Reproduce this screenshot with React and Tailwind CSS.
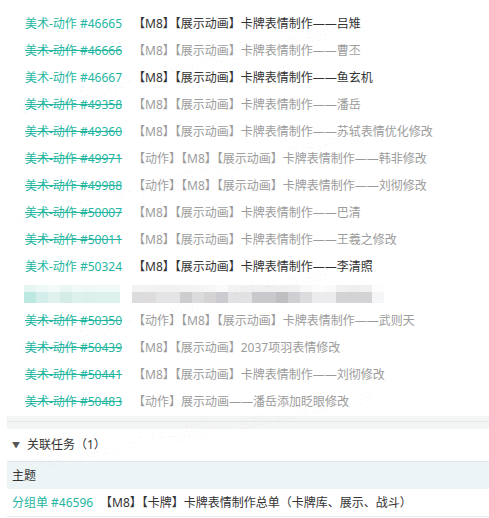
import React from "react";

const rows = [
  { id: "46665", t: "【M8】【展示动画】卡牌表情制作——吕雉", done: false },
  { id: "46666", t: "【M8】【展示动画】卡牌表情制作——曹丕", done: true },
  { id: "46667", t: "【M8】【展示动画】卡牌表情制作——鱼玄机", done: false },
  { id: "49358", t: "【M8】【展示动画】卡牌表情制作——潘岳", done: true },
  { id: "49360", t: "【M8】【展示动画】卡牌表情制作——苏轼表情优化修改", done: true },
  { id: "49971", t: "【动作】【M8】【展示动画】卡牌表情制作——韩非修改", done: true },
  { id: "49988", t: "【动作】【M8】【展示动画】卡牌表情制作——刘彻修改", done: true },
  { id: "50007", t: "【M8】【展示动画】卡牌表情制作——巴清", done: true },
  { id: "50011", t: "【M8】【展示动画】卡牌表情制作——王羲之修改", done: true },
  { id: "50324", t: "【M8】【展示动画】卡牌表情制作——李清照", done: false },
  { blur: true },
  { id: "50350", t: "【动作】【M8】【展示动画】卡牌表情制作——武则天", done: true },
  { id: "50439", t: "【M8】【展示动画】2037项羽表情修改", done: true },
  { id: "50441", t: "【M8】【展示动画】卡牌表情制作——刘彻修改", done: true },
  { id: "50483", t: "【动作】展示动画——潘岳添加眨眼修改", done: true },
];

const tealBottom = ["#bde8e2", "#d4efeb", "#dff2ef", "#d5ebe8", "#dcf0ed", "#dbf0ec", "#dcf0ed", "#dcf0ed"];
const tealTop = ["#e4f5f2", "#eef8f6", "#f3faf9", "#eaf6f4", "#f0f9f7", "#eff8f7", "#f0f9f7", "#f0f9f7"];
const grayBottom = ["#dcdbdd", "#dedcdd", "#e4e3e5", "#e4e3e5", "#cdcdd0", "#dcdbde", "#d6d3d4", "#cccbd0", "#e2e1e3", "#e2e1e3", "#c9c8cc", "#c9c8cc", "#bfbfc2", "#cfced2", "#dcdcdf", "#ececee", "#ececee", "#d3d2d5", "#d3d2d5", "#d3d2d5", "#f5f6f7"];
const grayTop = ["#f3f3f4", "#f2f2f3", "#f1f1f2", "#f1f1f2", "#f3f3f4", "#f4f4f5", "#f6f6f7", "#fafafa", "#f3f3f4", "#f1f1f2", "#f0f0f1", "#f0f0f1", "#f0f0f1", "#f1f1f2", "#f8f8f9", "#fcfcfc", "#fafafa", "#f0f0f1", "#eeeeef", "#f0f0f1", "#fdfdfd"];

function Strip({ colors, h }) {
  return (
    <div className={`flex ${h}`}>
      {colors.map((c, i) => (
        <div key={i} className="w-[12px] h-full" style={{ background: c }} />
      ))}
    </div>
  );
}

function BlurRow() {
  return (
    <div className="flex items-center h-[27px] pl-[24px]">
      <div className="flex flex-col">
        <Strip colors={tealTop} h="h-[7px]" />
        <Strip colors={tealBottom} h="h-[11px]" />
      </div>
      <div className="flex flex-col ml-[12px]">
        <Strip colors={grayTop} h="h-[7px]" />
        <Strip colors={grayBottom} h="h-[11px]" />
      </div>
    </div>
  );
}

const marks = [
  { x: 160, y: 40, t: "zengling6_3B878C0D4B8FD0061" },
  { x: 10, y: 84, t: "1CF8A30EC9ED3871E9A_王涛" },
  { x: 160, y: 150, t: "zengling6_3B878C0D4B8FD0061" },
  { x: 10, y: 194, t: "1CF8A30EC9ED3871E9A_王涛" },
  { x: 160, y: 280, t: "zengling6_3B878C0D4B8FD0061" },
  { x: 10, y: 324, t: "1CF8A30EC9ED3871E9A_王涛" },
  { x: 170, y: 410, t: "zengling6_3B878C0D4B8FD0061" },
  { x: 20, y: 440, t: "1CF8A30EC9ED3871E9A_王涛" },
];

export default function App() {
  return (
    <div
      className="relative w-[489px] h-[518px] bg-white overflow-hidden text-[12px] leading-none"
      style={{ fontFamily: '"Noto Sans", "Noto Sans CJK SC", sans-serif' }}
    >
      <div className="pt-[10px]">
        {rows.map((r, i) =>
          r.blur ? (
            <BlurRow key={i} />
          ) : (
            <div key={i} className="flex items-center h-[27px] pl-[25px] whitespace-nowrap">
              <span className={`w-[108px] shrink-0 text-[#24b6a1] ${r.done ? "line-through" : ""}`}>
                美术-动作 #{r.id}
              </span>
              <span className={r.done ? "text-[#9c9c9c]" : "text-[#333333]"}>{r.t}</span>
            </div>
          )
        )}
      </div>

      <div className="ml-[7px] mt-[1px]">
        <div className="h-[13px] bg-[#f3f5f5] flex flex-col">
          <div className="h-[5px]" />
          <div className="h-px bg-[#e2e8e8]" />
        </div>
        <div className="h-[32px] flex items-center pl-[5px] text-[#333333] text-[12px]">
          <span className="text-[8px] text-[#555] mr-[7px]">▼</span>
          <span>关联任务（1）</span>
        </div>
        <div className="h-[28px] flex items-center pl-[5px] bg-[#ecf4f5] border-t border-[#dde7e8] text-[#333333] text-[12px]">
          主题
        </div>
        <div className="h-[28px] flex items-center pl-[5px] border-b border-[#e8ecec] whitespace-nowrap">
          <span className="w-[88px] shrink-0 text-[#24b6a1]">分组单 #46596</span>
          <span className="text-[#333333]">【M8】【卡牌】卡牌表情制作总单（卡牌库、展示、战斗）</span>
        </div>
      </div>

      {marks.map((m, i) => (
        <div
          key={i}
          className="absolute pointer-events-none text-[14px] text-[rgba(0,0,0,0.03)] whitespace-nowrap"
          style={{ left: m.x, top: m.y, transform: "rotate(-12deg)" }}
        >
          {m.t}
        </div>
      ))}
    </div>
  );
}
